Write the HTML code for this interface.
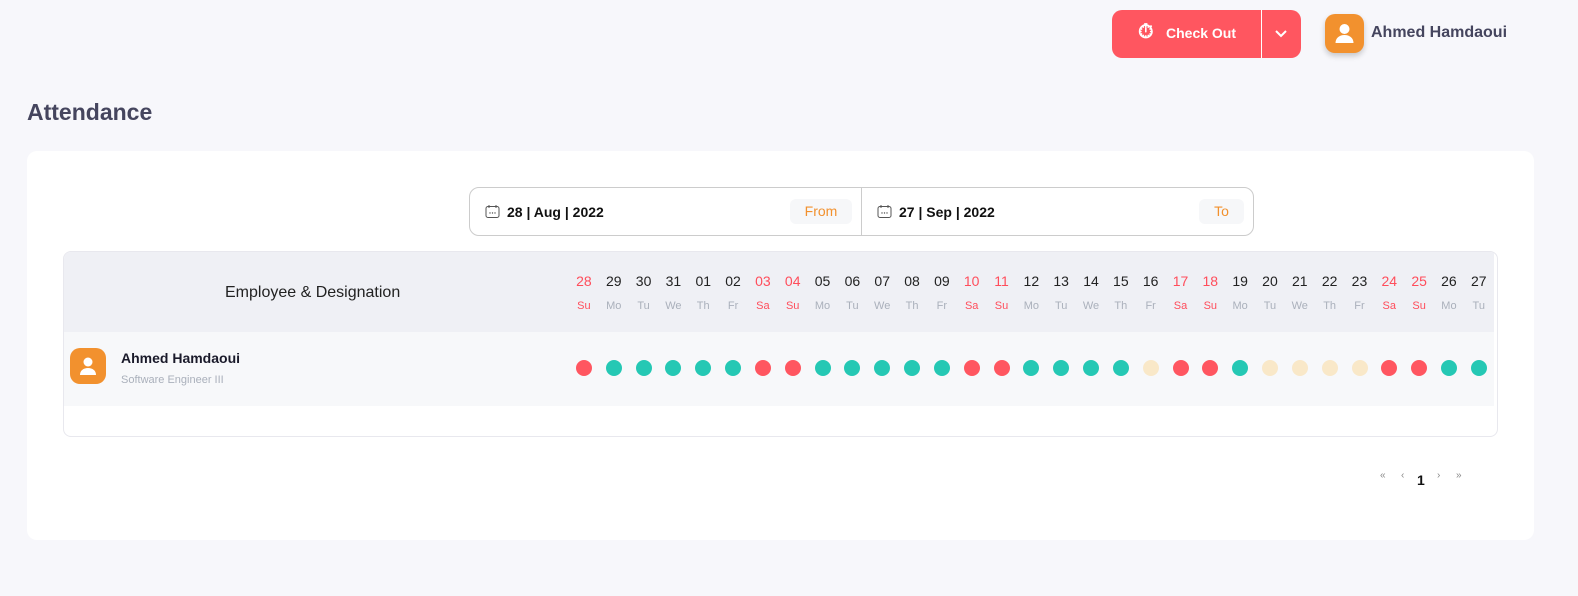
<!DOCTYPE html>
<html><head><meta charset="utf-8"><style>
*{box-sizing:border-box;margin:0;padding:0}
body{width:1578px;height:596px;background:#f7f7fb;font-family:"Liberation Sans",sans-serif;position:relative;overflow:hidden}
.btn{position:absolute;left:1112px;top:10px;width:189px;height:48px;background:#ff5660;border-radius:10px;color:#fff;font-weight:bold;font-size:14px}
.btn .t{position:absolute;left:28px;top:0;line-height:46px}
.btn .sep{position:absolute;left:149px;top:0;width:1px;height:48px;background:#fff}
.av{position:absolute;background:#f2912e;border-radius:10px}
.uname{position:absolute;left:1371px;top:24px;font-size:16px;font-weight:bold;color:#45455e}
h1{position:absolute;left:27px;top:99px;font-size:23px;color:#45455e;font-weight:bold}
.card{position:absolute;left:27px;top:151px;width:1507px;height:389px;background:#fff;border-radius:10px}
.dates{position:absolute;left:469px;top:187px;width:785px;height:49px;border:1px solid #ccc;border-radius:10px}
.dates .mid{position:absolute;left:391px;top:0;width:1px;height:47px;background:#ccc}
.dt{position:absolute;top:16px;font-size:14px;font-weight:bold;color:#111}
.tag{position:absolute;top:11px;height:25px;line-height:25px;background:#f6f7f9;border-radius:6px;color:#f2912e;font-size:14px;text-align:center}
.tbl{position:absolute;left:63px;top:251px;width:1435px;height:186px;border:1px solid #e8e8ee;border-radius:8px;overflow:hidden}
.hd{position:absolute;left:0;top:0;width:1430px;height:80px;background:#eff0f5}
.row{position:absolute;left:0;top:80px;width:1430px;height:74px;background:#f7f8fa}
.eh{position:absolute;left:161px;top:32px;font-size:16px;color:#222}
.cols{position:absolute;left:505px;top:0;display:flex}
.c{width:29.83px;text-align:center;position:relative;height:154px}
.c .n{position:absolute;left:0;right:0;top:21px;font-size:14px;color:#222}
.c .w{position:absolute;left:0;right:0;top:48px;font-size:11px;color:#aab0bb}
.c.r .n,.c.r .w{color:#ff4d5b}
.c i{position:absolute;left:7px;top:108px;width:16px;height:16px;border-radius:50%;background:#25c8b4}
.c i.r{background:#ff5660}.c i.b{background:#f9e8c8}
.pg{position:absolute;top:470px;font-size:10px;color:#888}
</style></head><body>
<div class="btn"><span style="position:absolute;left:26px;top:11px;font-size:20px">⏱</span><span class="t" style="left:54px">Check Out</span><div class="sep"></div>
<svg style="position:absolute;left:162px;top:19px" width="14" height="10" viewBox="0 0 14 10"><path d="M2 2l5 5 5-5" stroke="#fff" stroke-width="2" fill="none"/></svg></div>
<div class="av" style="left:1325px;top:14px;width:39px;height:39px;box-shadow:0 3px 6px rgba(0,0,0,.2)"><svg width="39" height="39" viewBox="0 0 39 39"><circle cx="19.5" cy="15" r="5" fill="#fff"/><path d="M10.5 29c0-5 4-8 9-8s9 3 9 8z" fill="#fff"/></svg></div>
<div class="uname">Ahmed Hamdaoui</div>
<h1>Attendance</h1>
<div class="card"></div>
<div class="dates"><div class="mid"></div>
<svg style="position:absolute;left:15px;top:16px" width="15" height="15" viewBox="0 0 15 15"><rect x="1" y="2.5" width="13" height="11" rx="2" stroke="#555" fill="none"/><path d="M4 1v3M11 1v3" stroke="#555"/><circle cx="5" cy="9" r=".7" fill="#555"/><circle cx="7.5" cy="9" r=".7" fill="#555"/><circle cx="10" cy="9" r=".7" fill="#555"/></svg>
<div class="dt" style="left:37px">28 | Aug | 2022</div><div class="tag" style="left:320px;width:62px">From</div>
<svg style="position:absolute;left:407px;top:16px" width="15" height="15" viewBox="0 0 15 15"><rect x="1" y="2.5" width="13" height="11" rx="2" stroke="#555" fill="none"/><path d="M4 1v3M11 1v3" stroke="#555"/><circle cx="5" cy="9" r=".7" fill="#555"/><circle cx="7.5" cy="9" r=".7" fill="#555"/><circle cx="10" cy="9" r=".7" fill="#555"/></svg>
<div class="dt" style="left:429px">27 | Sep | 2022</div><div class="tag" style="left:729px;width:45px">To</div></div>
<div class="tbl"><div class="hd"><div class="eh">Employee &amp; Designation</div></div><div class="row">
<div class="av" style="left:6px;top:16px;width:36px;height:36px"><svg width="36" height="36" viewBox="0 0 36 36"><circle cx="18" cy="14" r="4.5" fill="#fff"/><path d="M10 27c0-4.5 3.5-7 8-7s8 2.5 8 7z" fill="#fff"/></svg></div>
<div style="position:absolute;left:57px;top:18px;font-size:14px;font-weight:bold;color:#1a1a2a">Ahmed Hamdaoui</div>
<div style="position:absolute;left:57px;top:42px;font-size:11px;color:#aab0bb">Software Engineer III</div></div>
<div class="cols">
<div class="c r"><div class="n">28</div><div class="w">Su</div><i class="r"></i></div>
<div class="c"><div class="n">29</div><div class="w">Mo</div><i></i></div>
<div class="c"><div class="n">30</div><div class="w">Tu</div><i></i></div>
<div class="c"><div class="n">31</div><div class="w">We</div><i></i></div>
<div class="c"><div class="n">01</div><div class="w">Th</div><i></i></div>
<div class="c"><div class="n">02</div><div class="w">Fr</div><i></i></div>
<div class="c r"><div class="n">03</div><div class="w">Sa</div><i class="r"></i></div>
<div class="c r"><div class="n">04</div><div class="w">Su</div><i class="r"></i></div>
<div class="c"><div class="n">05</div><div class="w">Mo</div><i></i></div>
<div class="c"><div class="n">06</div><div class="w">Tu</div><i></i></div>
<div class="c"><div class="n">07</div><div class="w">We</div><i></i></div>
<div class="c"><div class="n">08</div><div class="w">Th</div><i></i></div>
<div class="c"><div class="n">09</div><div class="w">Fr</div><i></i></div>
<div class="c r"><div class="n">10</div><div class="w">Sa</div><i class="r"></i></div>
<div class="c r"><div class="n">11</div><div class="w">Su</div><i class="r"></i></div>
<div class="c"><div class="n">12</div><div class="w">Mo</div><i></i></div>
<div class="c"><div class="n">13</div><div class="w">Tu</div><i></i></div>
<div class="c"><div class="n">14</div><div class="w">We</div><i></i></div>
<div class="c"><div class="n">15</div><div class="w">Th</div><i></i></div>
<div class="c"><div class="n">16</div><div class="w">Fr</div><i class="b"></i></div>
<div class="c r"><div class="n">17</div><div class="w">Sa</div><i class="r"></i></div>
<div class="c r"><div class="n">18</div><div class="w">Su</div><i class="r"></i></div>
<div class="c"><div class="n">19</div><div class="w">Mo</div><i></i></div>
<div class="c"><div class="n">20</div><div class="w">Tu</div><i class="b"></i></div>
<div class="c"><div class="n">21</div><div class="w">We</div><i class="b"></i></div>
<div class="c"><div class="n">22</div><div class="w">Th</div><i class="b"></i></div>
<div class="c"><div class="n">23</div><div class="w">Fr</div><i class="b"></i></div>
<div class="c r"><div class="n">24</div><div class="w">Sa</div><i class="r"></i></div>
<div class="c r"><div class="n">25</div><div class="w">Su</div><i class="r"></i></div>
<div class="c"><div class="n">26</div><div class="w">Mo</div><i></i></div>
<div class="c"><div class="n">27</div><div class="w">Tu</div><i></i></div>
</div></div>
<div class="pg" style="left:1380px">«</div><div class="pg" style="left:1401px">‹</div>
<div class="pg" style="left:1417px;top:472px;font-size:14px;font-weight:bold;color:#111">1</div>
<div class="pg" style="left:1437px">›</div><div class="pg" style="left:1456px">»</div>
</body></html>
